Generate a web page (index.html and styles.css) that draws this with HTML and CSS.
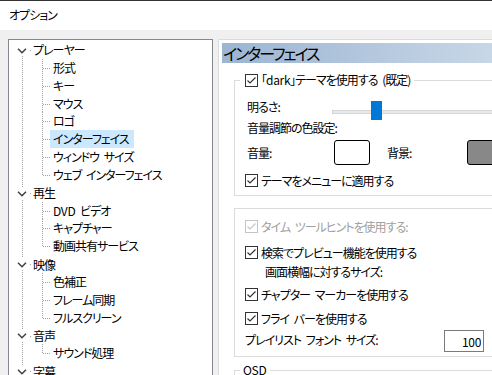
FILE: index.html
```html
<!DOCTYPE html>
<html lang="ja">
<head>
  <meta charset="UTF-8">
  <meta name="viewport" content="width=device-width, initial-scale=1.0">
  <title>オプション</title>
  <link rel="stylesheet" href="styles.css">
</head>
<body>

  <div class="titlebar">オプション</div>

  <div class="main">
    <!-- page tree -->
    <div class="tree">
      <ul class="tree-root">
        <li>
          <div class="node-row"><span class="twisty"><svg width="10" height="6" viewBox="0 0 10 6"><polyline points="1,0.8 5,4.8 9,0.8"/></svg></span><span class="node-text">プレーヤー</span></div>
          <ul class="tree-children">
            <li><span class="leaf">形式</span></li>
            <li><span class="leaf">キー</span></li>
            <li><span class="leaf">マウス</span></li>
            <li><span class="leaf">ロゴ</span></li>
            <li><span class="leaf selected">インターフェイス</span></li>
            <li><span class="leaf">ウィンドウ サイズ</span></li>
            <li><span class="leaf">ウェブ インターフェイス</span></li>
          </ul>
        </li>
        <li>
          <div class="node-row"><span class="twisty"><svg width="10" height="6" viewBox="0 0 10 6"><polyline points="1,0.8 5,4.8 9,0.8"/></svg></span><span class="node-text">再生</span></div>
          <ul class="tree-children">
            <li><span class="leaf"><span class="latin">DVD</span> ビデオ</span></li>
            <li><span class="leaf">キャプチャー</span></li>
            <li><span class="leaf">動画共有サービス</span></li>
          </ul>
        </li>
        <li>
          <div class="node-row"><span class="twisty"><svg width="10" height="6" viewBox="0 0 10 6"><polyline points="1,0.8 5,4.8 9,0.8"/></svg></span><span class="node-text">映像</span></div>
          <ul class="tree-children">
            <li><span class="leaf">色補正</span></li>
            <li><span class="leaf">フレーム同期</span></li>
            <li><span class="leaf">フルスクリーン</span></li>
          </ul>
        </li>
        <li>
          <div class="node-row"><span class="twisty"><svg width="10" height="6" viewBox="0 0 10 6"><polyline points="1,0.8 5,4.8 9,0.8"/></svg></span><span class="node-text">音声</span></div>
          <ul class="tree-children">
            <li><span class="leaf">サウンド処理</span></li>
          </ul>
        </li>
        <li>
          <div class="node-row"><span class="twisty"><svg width="10" height="6" viewBox="0 0 10 6"><polyline points="1,0.8 5,4.8 9,0.8"/></svg></span><span class="node-text">字幕</span></div>
        </li>
      </ul>
    </div>

    <!-- settings page -->
    <div class="page">
      <div class="page-header">インターフェイス</div>

      <fieldset class="group group-theme">
        <legend>
          <label class="check"><span class="box"><svg width="13" height="13" viewBox="0 0 13 13"><rect x="0.5" y="0.5" width="12" height="12"/><polyline points="2.5,6.5 5,9 10.5,3.5"/></svg></span>「<span class="latin">dark</span>」テーマを使用する (既定)</label>
        </legend>

        <div class="row-brightness">
          <span class="label brightness-label">明るさ:</span>
          <div class="slider">
            <div class="slider-track"></div>
            <div class="slider-thumb"></div>
          </div>
        </div>

        <div class="label color-title">音量調節の色設定:</div>

        <div class="row-colors">
          <span class="label volume-label">音量:</span>
          <span class="swatch swatch-white"></span>
          <span class="label back-label">背景:</span>
          <span class="swatch swatch-gray"></span>
        </div>

        <label class="check row-menu"><span class="box"><svg width="13" height="13" viewBox="0 0 13 13"><rect x="0.5" y="0.5" width="12" height="12"/><polyline points="2.5,6.5 5,9 10.5,3.5"/></svg></span>テーマをメニューに適用する</label>
      </fieldset>

      <fieldset class="group group-misc">
        <label class="check disabled row-tooltip"><span class="box"><svg width="13" height="13" viewBox="0 0 13 13"><rect x="0.5" y="0.5" width="12" height="12"/><polyline points="2.5,6.5 5,9 10.5,3.5"/></svg></span>タイム ツールヒントを使用する:</label>
        <label class="check row-preview"><span class="box"><svg width="13" height="13" viewBox="0 0 13 13"><rect x="0.5" y="0.5" width="12" height="12"/><polyline points="2.5,6.5 5,9 10.5,3.5"/></svg></span>検索でプレビュー機能を使用する</label>
        <div class="label row-size">画面横幅に対するサイズ:</div>
        <label class="check row-chapter"><span class="box"><svg width="13" height="13" viewBox="0 0 13 13"><rect x="0.5" y="0.5" width="12" height="12"/><polyline points="2.5,6.5 5,9 10.5,3.5"/></svg></span>チャプター マーカーを使用する</label>
        <label class="check row-flybar"><span class="box"><svg width="13" height="13" viewBox="0 0 13 13"><rect x="0.5" y="0.5" width="12" height="12"/><polyline points="2.5,6.5 5,9 10.5,3.5"/></svg></span>フライ バーを使用する</label>
        <div class="row-font">
          <span class="label font-label">プレイリスト フォント サイズ:</span>
          <input type="text" class="num-input" value="100" readonly>
        </div>
      </fieldset>

      <fieldset class="group group-osd">
        <legend class="osd-legend latin">OSD</legend>
      </fieldset>
    </div>
  </div>

</body>
</html>
```

FILE: styles.css
```css
* {
  box-sizing: border-box;
  margin: 0;
  padding: 0;
}

body {
  font-family: "Noto Sans CJK JP", sans-serif;
  font-size: 12px;
  font-feature-settings: "palt" 1;
  letter-spacing: -1px;
  word-spacing: 3px;
  color: #000;
  background-color: #f0f0f0;
  width: 492px;
  height: 375px;
  overflow: hidden;
}

.latin {
  letter-spacing: -0.3px;
}

.titlebar {
  height: 30px;
  background-color: #fff;
  border-top: 1px solid #333;
  padding-left: 9px;
  line-height: 28px;
}

.main {
  display: flex;
  gap: 5px;
  padding: 9px 0 0 8px;
}

/* tree */

.tree {
  flex: none;
  width: 205px;
  height: 400px;
  background-color: #fff;
  border: 1px solid #828790;
  padding-top: 1px;
  overflow: hidden;
}

.tree ul {
  list-style: none;
}

.tree-root {
  background-image: repeating-linear-gradient(to bottom, #a0a0a0 0 1px, transparent 1px 2px);
  background-size: 1px 100%;
  background-position: 13px 9px;
  background-repeat: no-repeat;
}

.node-row {
  display: flex;
  align-items: center;
  height: 17.85px;
  background-image: repeating-linear-gradient(to right, #a0a0a0 0 1px, transparent 1px 2px);
  background-size: 9px 1px;
  background-position: 13px 9px;
  background-repeat: no-repeat;
}

.twisty {
  display: flex;
  align-items: center;
  width: 12px;
  height: 12px;
  margin-left: 8px;
  background-color: #fff;
}

.twisty svg {
  margin-top: 2px;
}

.twisty polyline {
  fill: none;
  stroke: #404040;
  stroke-width: 1.5;
}

.node-text {
  margin-left: 4px;
}

.tree-children li {
  height: 17.85px;
  background-image:
    repeating-linear-gradient(to bottom, #a0a0a0 0 1px, transparent 1px 2px),
    repeating-linear-gradient(to right, #a0a0a0 0 1px, transparent 1px 2px);
  background-size: 1px 100%, 7px 1px;
  background-position: 33px 0, 34px 9px;
  background-repeat: no-repeat;
}

.tree-children li:last-child {
  background-size: 1px 9px, 7px 1px;
}

.leaf {
  display: inline-block;
  height: 100%;
  line-height: 17.85px;
  margin-left: 41px;
  padding: 0 5px 0 3px;
}

.leaf.selected {
  background-color: #cce8ff;
}

/* settings page */

.page {
  flex: none;
  width: 320px;
  height: 400px;
  background-color: #fff;
  border: 1px solid #dcdcdc;
  padding: 3px;
}

.page-header {
  height: 20px;
  line-height: 20px;
  padding-left: 1px;
  font-size: 16px;
  letter-spacing: -2px;
  background: linear-gradient(to right, #9bb5d2, #cfdcea);
}

.group {
  width: 290px;
  margin-left: 12px;
  border: 1px solid #dcdcdc;
  padding: 0 0 0 10px;
}

.group legend {
  margin-left: -5px;
  padding: 0 4px 0 5px;
  line-height: 16px;
}

.label {
  line-height: 16px;
}

.check {
  display: flex;
  align-items: center;
  height: 16px;
}

.box {
  display: flex;
  margin-right: 3px;
}

.box rect {
  fill: #fff;
  stroke: #333;
}

.box polyline {
  fill: none;
  stroke: #333;
  stroke-width: 1.2;
}

.check.disabled {
  color: #a0a0a0;
}

.check.disabled rect,
.check.disabled polyline {
  stroke: #c4c4c4;
}

.group-theme {
  margin-top: 9px;
  padding-bottom: 7px;
}

.row-brightness {
  display: flex;
  margin-top: 11px;
}

.brightness-label {
  width: 85px;
  margin-left: 2px;
}

.slider {
  position: relative;
  flex: 1;
  height: 21px;
}

.slider-track {
  margin-top: 11px;
  height: 4px;
  background-color: #e7eaea;
  border: 1px solid #d6d6d6;
}

.slider-thumb {
  position: absolute;
  left: 39px;
  top: 2px;
  width: 11px;
  height: 19px;
  background-color: #0078d7;
}

.color-title {
  margin-left: 2px;
}

.row-colors {
  display: flex;
  align-items: center;
  margin-top: 4px;
}

.volume-label {
  width: 87px;
  margin-left: 2px;
}

.back-label {
  width: 80px;
  margin-left: 17px;
}

.swatch {
  width: 36px;
  height: 25px;
  border: 1px solid #000;
  border-radius: 3px;
}

.swatch-white {
  background-color: #fff;
}

.swatch-gray {
  background-color: #888;
}

.row-menu {
  margin-top: 7px;
}

.group-misc {
  margin-top: 12px;
  padding-top: 9px;
  padding-bottom: 4px;
}

.row-preview {
  margin-top: 10px;
}

.row-size {
  margin-top: 4px;
  margin-left: 20px;
}

.row-chapter {
  margin-top: 6px;
}

.row-flybar {
  margin-top: 8px;
}

.row-font {
  display: flex;
  margin-top: 4px;
}

.font-label {
  width: 199px;
  margin-top: 2px;
}

.num-input {
  width: 40px;
  height: 22px;
  border: 1px solid #7a7a7a;
  font: inherit;
  letter-spacing: -0.3px;
  text-align: right;
  padding-right: 2px;
}

.group-osd {
  margin-top: 5px;
  height: 40px;
}

.group-osd .osd-legend {
  padding-left: 3px;
}
```
